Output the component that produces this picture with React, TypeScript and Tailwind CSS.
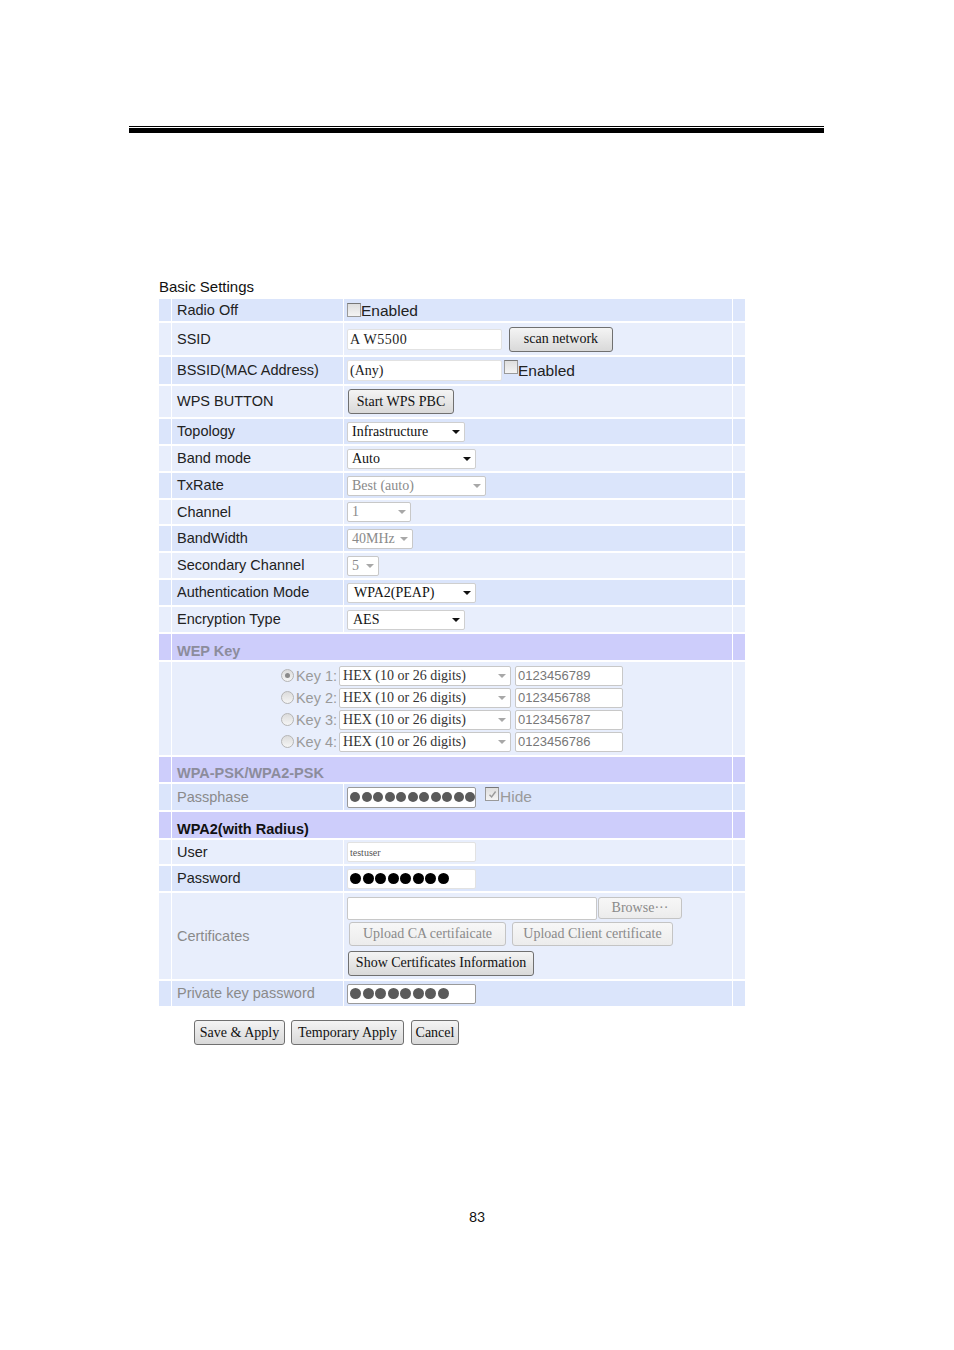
import React from "react";

const sans = "font-['Liberation_Sans',Arial,sans-serif]";
const serif = "font-['Liberation_Serif','Times_New_Roman',serif]";

const DARK = "bg-[#dbe5fb]";
const LIGHT = "bg-[#e8eefc]";
const HEAD = "bg-[#cdcdfb]";

type Tone = "d" | "l";

const Row = ({
  h,
  tone,
  label,
  muted,
  children,
}: {
  h: string;
  tone: Tone;
  label: string;
  muted?: boolean;
  children?: React.ReactNode;
}) => {
  const bg = tone === "d" ? DARK : LIGHT;
  return (
    <>
      <div className={`${bg} ${h}`} />
      <div
        className={`${bg} flex items-center pl-[5px] text-[14.5px] leading-[17px] ${
          muted ? "text-[#8a8a8a]" : "text-[#222]"
        }`}
      >
        {label}
      </div>
      <div className={`${bg} flex items-center pl-[3px] leading-[17px]`}>{children}</div>
      <div className={bg} />
    </>
  );
};

const Header = ({ h, label, dark }: { h: string; label: string; dark?: boolean }) => (
  <>
    <div className={`${HEAD} ${h}`} />
    <div
      className={`${HEAD} col-span-2 flex items-center pl-[5px] pt-[7px] text-[14.5px] leading-[16px] font-bold ${
        dark ? "text-[#111]" : "text-[#8c8c9c]"
      }`}
    >
      {label}
    </div>
    <div className={HEAD} />
  </>
);

const Checkbox = ({ checked }: { checked?: boolean }) => (
  <span className="flex h-[14px] w-[14px] items-center justify-center border border-[#9a9a9a] border-t-[#777] bg-gradient-to-b from-[#dedede] to-[#f4f4f4]">
    {checked && (
      <svg width="9" height="9" viewBox="0 0 9 9">
        <path d="M1.5 4.8 L3.6 7 L7.6 1.5" fill="none" stroke="#9a9a9a" strokeWidth="1.4" />
      </svg>
    )}
  </span>
);

const Radio = ({ checked }: { checked?: boolean }) => (
  <span className="flex h-[13px] w-[13px] items-center justify-center rounded-full border border-[#b5b5b5] bg-gradient-to-b from-[#dcdcdc] to-[#f5f5f5]">
    {checked && <span className="h-[5px] w-[5px] rounded-full bg-[#8a8a8a]" />}
  </span>
);

const Select = ({
  w,
  text,
  disabled,
  pad = "pl-[4px]",
  ink,
}: {
  w: string;
  text: string;
  disabled?: boolean;
  pad?: string;
  ink?: string;
}) => (
  <div
    className={`${w} ${serif} ${pad} flex h-[20px] items-center justify-between rounded-[2px] border bg-white pr-[4px] text-[14px] leading-none ${
      disabled ? "border-[#c8c8c8]" : "border-[#cfcfcf]"
    } ${ink ?? (disabled ? "text-[#8a8a8a]" : "text-[#111]")}`}
  >
    <span className="whitespace-nowrap">{text}</span>
    {disabled ? (
      <span className="border-x-[4px] border-t-[4px] border-x-transparent border-t-[#a8a8a8]" />
    ) : (
      <span className="border-x-[4px] border-t-[4px] border-x-transparent border-t-[#111]" />
    )}
  </div>
);

const Btn = ({
  w,
  h = "h-[25px]",
  text,
  disabled,
}: {
  w: string;
  h?: string;
  text: string;
  disabled?: boolean;
}) => (
  <div
    className={`${w} ${h} ${serif} flex items-center justify-center whitespace-nowrap rounded-[3px] border text-[14px] leading-none ${
      disabled
        ? "border-[#c4c4c4] bg-gradient-to-b from-[#f7f7f7] to-[#ececec] text-[#8a8a8a]"
        : "border-[#707070] bg-gradient-to-b from-[#f4f4f4] to-[#d9d9d9] text-[#111]"
    }`}
  >
    {text}
  </div>
);

const Dots = ({ n, color, size }: { n: number; color: string; size: string }) => (
  <div className="flex items-center gap-[1.5px] pl-[2px]">
    {Array.from({ length: n }).map((_, i) => (
      <span key={i} className={`${size} ${color} rounded-full`} />
    ))}
  </div>
);

const wepKeys = ["0123456789", "0123456788", "0123456787", "0123456786"];

export default function App() {
  return (
    <div className={`${sans} flex h-[1350px] w-[954px] flex-col bg-white text-[#222]`}>
      <div className="ml-[129px] mt-[126px] w-[695px]">
        <div className="h-px bg-black" />
        <div className="mt-px h-[5px] bg-black" />
      </div>

      <div className="ml-[159px] mt-[146px] w-[586px]">
        <div className="h-[20px] text-[15px] leading-[16px] text-[#111]">Basic Settings</div>

        <div className="grid grid-cols-[12px_171px_388px_12px] gap-x-px gap-y-[2px]">
          <Row h="h-[22px]" tone="d" label="Radio Off">
            <Checkbox />
            <span className="mt-[2px] text-[15.5px] leading-[16px] text-[#222]">Enabled</span>
          </Row>
          <Row h="h-[32px]" tone="l" label="SSID">
            <div className={`${serif} flex h-[21px] w-[155px] items-center rounded-[2px] border border-[#e2e2e2] bg-white pl-[2px] text-[14px] tracking-[0.5px]`}>
              A W5500
            </div>
            <div className="ml-[7px]">
              <Btn w="w-[104px]" text="scan network" />
            </div>
          </Row>
          <Row h="h-[27px]" tone="d" label="BSSID(MAC Address)">
            <div className={`${serif} flex h-[21px] w-[155px] items-center rounded-[2px] border border-[#e2e2e2] bg-white pl-[2px] text-[14px]`}>
              (Any)
            </div>
            <div className="ml-[2px] self-start pt-[3px]">
              <Checkbox />
            </div>
            <span className="text-[15.5px] leading-[16px]">Enabled</span>
          </Row>
          <Row h="h-[31px]" tone="l" label="WPS BUTTON">
            <div className="ml-px">
              <Btn w="w-[106px]" text="Start WPS PBC" />
            </div>
          </Row>
          <Row h="h-[25px]" tone="d" label="Topology">
            <Select w="w-[118px]" text="Infrastructure" />
          </Row>
          <Row h="h-[25px]" tone="l" label="Band mode">
            <Select w="w-[129px]" text="Auto" />
          </Row>
          <Row h="h-[25px]" tone="d" label="TxRate">
            <Select w="w-[139px]" text="Best (auto)" disabled />
          </Row>
          <Row h="h-[24px]" tone="l" label="Channel">
            <Select w="w-[64px]" text="1" disabled />
          </Row>
          <Row h="h-[25px]" tone="d" label="BandWidth">
            <Select w="w-[66px]" text="40MHz" disabled />
          </Row>
          <Row h="h-[25px]" tone="l" label="Secondary Channel">
            <Select w="w-[32px]" text="5" disabled />
          </Row>
          <Row h="h-[25px]" tone="d" label="Authentication Mode">
            <Select w="w-[129px]" text="WPA2(PEAP)" pad="pl-[6px]" />
          </Row>
          <Row h="h-[25px]" tone="l" label="Encryption Type">
            <Select w="w-[118px]" text="AES" pad="pl-[5px]" />
          </Row>

          <Header h="h-[26px]" label="WEP Key" />
          <div className={`${LIGHT} h-[93px]`} />
          <div className={`${LIGHT} col-span-2 flex flex-col items-center justify-center`}>
            {wepKeys.map((k, i) => (
              <div key={k} className="flex h-[22px] items-center">
                <Radio checked={i === 0} />
                <span className="ml-[2px] text-[14.5px] leading-[16px] text-[#9a9a9a]">Key {i + 1}:</span>
                <div className="ml-[2px]">
                  <Select
                    w="w-[172px]"
                    text="HEX (10 or 26 digits)"
                    pad="pl-[3px]"
                    ink="text-[#333]"
                    disabled
                  />
                </div>
                <div className="ml-[4px] flex h-[20px] w-[108px] items-center rounded-[2px] border border-[#c8c8c8] bg-white pl-[2px] text-[13px] leading-[16px] text-[#777]">
                  {k}
                </div>
              </div>
            ))}
          </div>
          <div className={LIGHT} />

          <Header h="h-[25px]" label="WPA-PSK/WPA2-PSK" />
          <Row h="h-[26px]" tone="d" label="Passphase" muted>
            <div className="flex h-[21px] w-[129px] items-center rounded-[2px] border border-[#9a9a9a] bg-white">
              <Dots n={11} color="bg-[#5a5a5a]" size="h-[10px] w-[10px]" />
            </div>
            <div className="ml-[9px] self-start pt-[3px]">
              <Checkbox checked />
            </div>
            <span className="ml-px text-[15.5px] leading-[16px] text-[#9a9a9a]">Hide</span>
          </Row>

          <Header h="h-[26px]" label="WPA2(with Radius)" dark />
          <Row h="h-[24px]" tone="l" label="User">
            <div className={`${serif} flex h-[20px] w-[129px] items-center rounded-[2px] border border-[#e2e2e2] bg-white pl-[2px] text-[10px] text-[#555]`}>
              testuser
            </div>
          </Row>
          <Row h="h-[25px]" tone="d" label="Password">
            <div className="flex h-[20px] w-[129px] items-center rounded-[2px] border border-[#e2e2e2] bg-white">
              <Dots n={8} color="bg-black" size="h-[11px] w-[11px]" />
            </div>
          </Row>
          <Row h="h-[86px]" tone="l" label="Certificates" muted>
            <div className="flex flex-col">
              <div className="flex items-start">
                <div className="h-[23px] w-[250px] rounded-[2px] border border-[#c8c8c8] bg-white" />
                <div className="ml-[1px]">
                  <Btn w="w-[84px]" h="h-[22px]" text="Browse···" disabled />
                </div>
              </div>
              <div className="ml-[2px] mt-[2px] flex gap-[6px]">
                <Btn w="w-[157px]" h="h-[24px]" text="Upload CA certifaicate" disabled />
                <Btn w="w-[161px]" h="h-[24px]" text="Upload Client certificate" disabled />
              </div>
              <div className="ml-px mt-[5px]">
                <Btn w="w-[186px]" text="Show Certificates Information" />
              </div>
            </div>
          </Row>
          <Row h="h-[25px]" tone="d" label="Private key password" muted>
            <div className="flex h-[20px] w-[129px] items-center rounded-[2px] border border-[#9a9a9a] bg-white">
              <Dots n={8} color="bg-[#5a5a5a]" size="h-[11px] w-[11px]" />
            </div>
          </Row>
        </div>

        <div className="ml-[35px] mt-[14px] flex gap-[6px]">
          <Btn w="w-[91px]" text="Save & Apply" />
          <Btn w="w-[113px]" text="Temporary Apply" />
          <div className="ml-px">
            <Btn w="w-[48px]" text="Cancel" />
          </div>
        </div>
      </div>

      <div className="mt-[161px] text-center font-['Lato',sans-serif] text-[14px] text-[#111]">83</div>
    </div>
  );
}
